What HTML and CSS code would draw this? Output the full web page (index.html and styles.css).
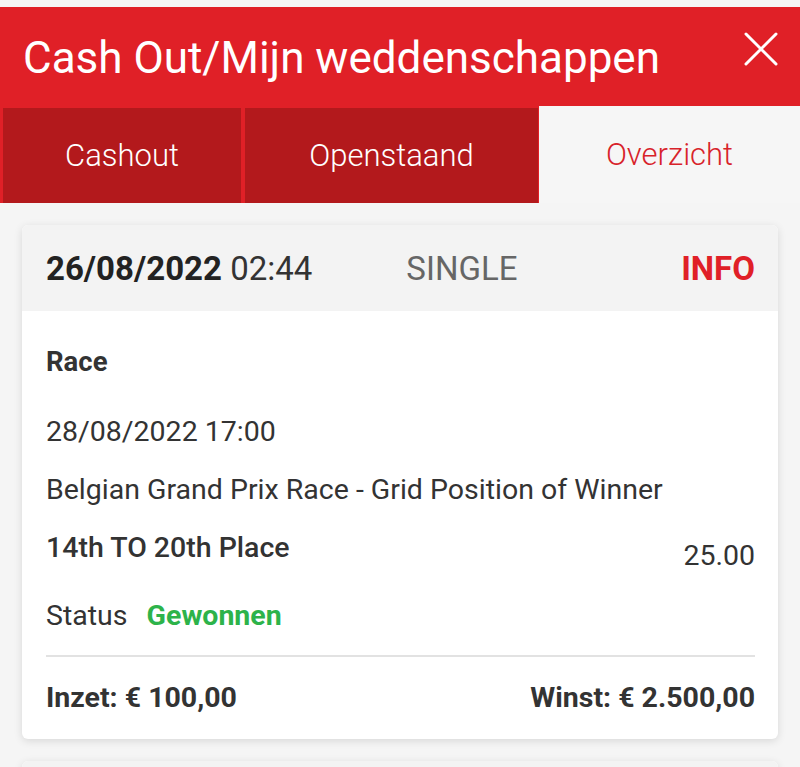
FILE: index.html
```html
<!DOCTYPE html>
<html lang="nl">
<head>
<meta charset="UTF-8" />
<meta name="viewport" content="width=device-width, initial-scale=1" />
<title>Cash Out/Mijn weddenschappen</title>
<link rel="stylesheet" href="styles.css">
</head>
<body>

<header class="topbar">
  <h1 class="title">Cash Out/Mijn weddenschappen</h1>
  <button class="close-btn" aria-label="Sluiten">
    <svg width="34" height="34" viewBox="0 0 34 34">
      <path d="M2 2 L32 32 M32 2 L2 32" stroke="#fff" stroke-width="3" stroke-linecap="round" fill="none"/>
    </svg>
  </button>
</header>

<nav class="tabs">
  <a class="tab" href="#">Cashout</a>
  <a class="tab" href="#">Openstaand</a>
  <a class="tab active" href="#">Overzicht</a>
</nav>

<main class="bets">
  <div class="bet-card">
    <div class="bet-head">
      <span class="bet-date"><strong>26/08/2022</strong> 02:44</span>
      <span class="bet-type">SINGLE</span>
      <a class="bet-info" href="#">INFO</a>
    </div>
    <div class="bet-body">
      <div class="sport">Race</div>
      <div class="event-date">28/08/2022 17:00</div>
      <div class="market">Belgian Grand Prix Race - Grid Position of Winner</div>
      <div class="selection-row">
        <span class="selection">14th TO 20th Place</span>
        <span class="odds">25.00</span>
      </div>
      <div class="status">Status <span class="won">Gewonnen</span></div>
      <div class="totals">
        <span>Inzet: € 100,00</span>
        <span>Winst: € 2.500,00</span>
      </div>
    </div>
  </div>

  <div class="bet-card">
    <div class="bet-head"></div>
  </div>
</main>

</body>
</html>
```

FILE: styles.css
```css
body {
  margin: 0;
  padding-top: 7px;
  background: #f5f5f5;
  font-family: Roboto, "Liberation Sans", Arial, sans-serif;
  color: #333;
  overflow: hidden;
}

/* Header */
.topbar {
  display: flex;
  align-items: center;
  justify-content: space-between;
  height: 101px;
  padding: 0 22px 0 23px;
  background: #e02027;
}

.title {
  margin: 0;
  font-size: 44px;
  font-weight: 400;
  color: #fff;
}

.close-btn {
  background: none;
  border: none;
  padding: 0;
  margin-top: -15px;
  cursor: pointer;
}

/* Tabs */
.tabs {
  display: grid;
  grid-template-columns: 238px 293px 1fr;
  gap: 4px;
  padding-left: 3px;
  background: #e02027;
  height: 95px;
}

.tab {
  display: flex;
  align-items: center;
  justify-content: center;
  background: #b3191c;
  color: #fff;
  font-size: 31px;
  font-weight: 300;
  text-decoration: none;
}

.tab.active {
  background: #f6f6f6;
  color: #d8232a;
  margin: -2px 0 0 -3px;
}

/* Bets */
.bets {
  padding: 22px 22px 0;
}

.bet-card {
  background: #fff;
  border-radius: 6px;
  box-shadow: 0 2px 9px rgba(0,0,0,0.12);
  margin-bottom: 22px;
  overflow: hidden;
}

.bet-head {
  display: flex;
  align-items: center;
  height: 86px;
  padding: 0 23px 0 24px;
  background: #f3f3f3;
  font-size: 33px;
}

.bet-date strong {
  font-weight: 700;
  color: #222;
}

.bet-type {
  margin-left: 94px;
  color: #666;
}

.bet-info {
  margin-left: auto;
  color: #e02027;
  font-weight: 700;
  text-decoration: none;
}

.bet-body {
  padding: 34px 23px 24px 24px;
  font-size: 28.5px;
}

.sport {
  font-size: 27.5px;
  font-weight: 700;
  line-height: 34px;
}

.event-date {
  margin-top: 36px;
  line-height: 34px;
}

.market {
  margin-top: 24px;
  line-height: 34px;
}

.selection-row {
  display: flex;
  justify-content: space-between;
  margin-top: 24px;
}

.selection {
  font-weight: 500;
  line-height: 34px;
}

.odds {
  margin-top: 8px;
  line-height: 34px;
}

.status {
  margin-top: 26px;
  line-height: 34px;
}

.won {
  margin-left: 12px;
  color: #2db34a;
  font-weight: 700;
}

.totals {
  display: flex;
  justify-content: space-between;
  margin-top: 22px;
  padding-top: 24px;
  border-top: 2px solid #e2e2e2;
  font-weight: 700;
  line-height: 34px;
}
```
